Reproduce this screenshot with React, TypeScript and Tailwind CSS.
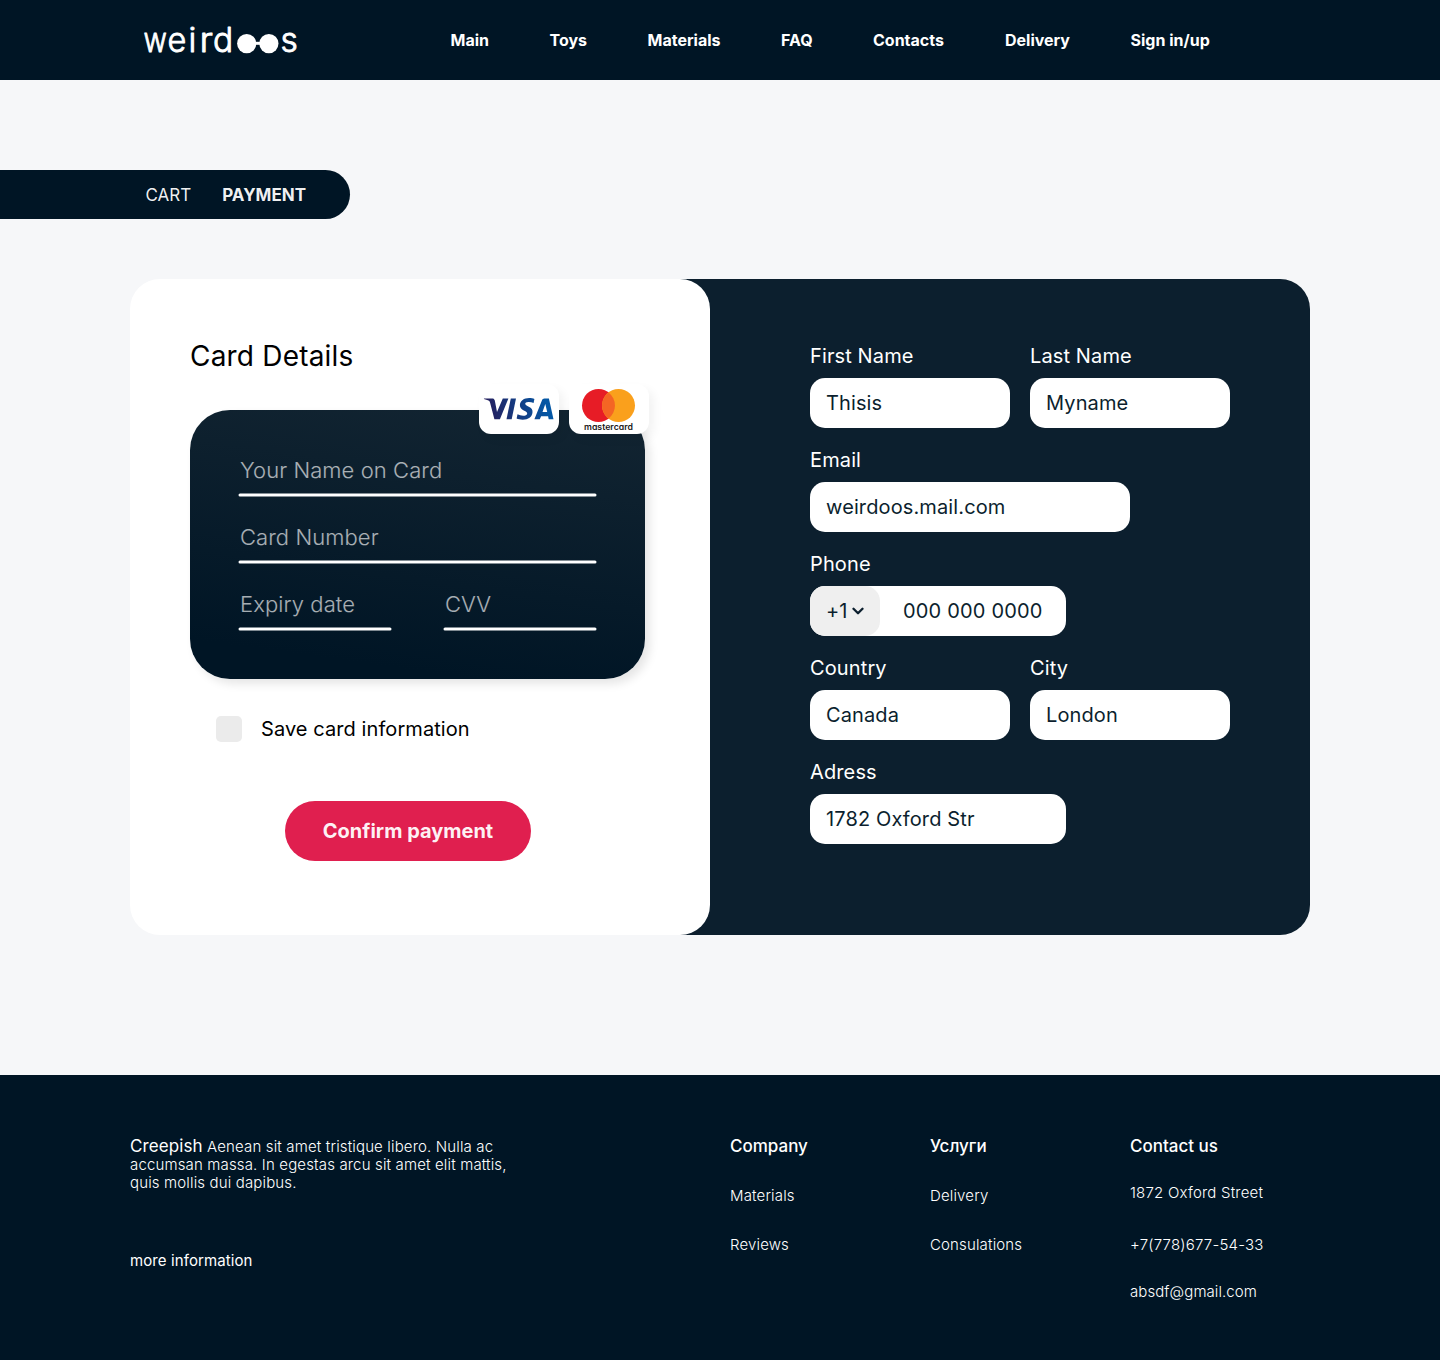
import React from "react";

const navItems = [
  { label: "Main", width: "w-[99px]" },
  { label: "Toys", width: "w-[98px]" },
  { label: "Materials", width: "w-[133.5px]" },
  { label: "FAQ", width: "w-[92px]" },
  { label: "Contacts", width: "w-[132px]" },
  { label: "Delivery", width: "w-[125.5px]" },
  { label: "Sign in/up", width: "w-[90px]" },
];

function Logo() {
  return (
    <svg width="160" height="60" viewBox="140 10 160 60" className="block overflow-visible" fill="white" stroke="white">
      <g fontFamily="Inter, sans-serif" fontSize="33.5" fontWeight="300" strokeWidth="0.9" strokeLinejoin="round">
        <text y="52.4" x="143.6" textLength="23.4" lengthAdjust="spacingAndGlyphs">w</text>
        <text y="52.4" x="167.4" textLength="18.8" lengthAdjust="spacingAndGlyphs">e</text>
        <text y="52.4" x="188.4">i</text>
        <text y="52.4" x="199.4" textLength="13.4" lengthAdjust="spacingAndGlyphs">r</text>
        <text y="52.4" x="213">d</text>
        <text y="52.4" x="280.6">s</text>
      </g>
      <g stroke="none">
        <circle cx="246.7" cy="43.6" r="9.6" />
        <circle cx="268.9" cy="43.6" r="9.6" />
        <rect x="254" y="41.8" width="8" height="3" />
      </g>
    </svg>
  );
}

function VisaLogo() {
  return (
    <svg width="80" height="50" viewBox="0 0 80 50" className="block">
      <defs>
        <linearGradient id="visa" gradientUnits="userSpaceOnUse" x1="10" y1="30" x2="66" y2="16">
          <stop offset="0" stopColor="#241f5e" />
          <stop offset="1" stopColor="#0457a5" />
        </linearGradient>
      </defs>
      <g fill="url(#visa)">
        <path d="M5 14.4H13.2C14.6 14.4 15.4 15 15.8 16.6L18 28L23.8 14.4H29.4L20.9 35.3H15.4L11.1 18.7C10.8 17.5 10.4 17 9.5 16.5C8.2 15.8 6.5 15.2 4.9 14.9Z" />
        <path d="M31.8 14.4H37L32.7 35.3H27.5Z" />
        <path d="M55.4 14.9L54.6 19C52.8 18.2 51.1 17.9 49.3 18C47.2 18.1 46.2 18.9 46.2 19.8C46.2 20.9 47.8 21.6 49.8 22.7C52.6 24.1 53.7 25.8 53.5 28.2C53.1 32.9 49.3 35.7 43.7 35.7C41.3 35.7 39.1 35.3 37.6 34.6L38.5 30.3C40.4 31.2 41.9 31.7 44.2 31.7C46.2 31.7 48.2 31 48.2 29.4C48.2 28.4 47.3 27.7 44.8 26.5C42.4 25.3 40.8 23.5 40.9 21C41.1 16.8 45 14 50.2 14C52.2 14 54 14.4 55.4 14.9Z" />
        <path fillRule="evenodd" d="M65.4 14.4H69.9L74.5 35.3H69.7L69.1 32.2H62.1L60.8 35.3H55.4L63 16.3C63.4 15.1 64.2 14.4 65.4 14.4ZM66.3 20L63.5 28.1H68.2Z" />
      </g>
    </svg>
  );
}

function MastercardLogo() {
  return (
    <svg width="80" height="50" viewBox="0 0 80 50" className="block">
      <circle cx="29.5" cy="21.5" r="16.5" fill="#e71c26" />
      <circle cx="49.5" cy="21.5" r="16.5" fill="#faa01c" />
      <path d="M39.5 8.4A16.5 16.5 0 0 1 39.5 34.6A16.5 16.5 0 0 1 39.5 8.4Z" fill="#f46524" />
      <text x="15" y="45.8" fontFamily="Inter, sans-serif" fontWeight="600" fontSize="8.4" textLength="49" lengthAdjust="spacingAndGlyphs" fill="#1a1718" className="[font-feature-settings:'cv11']">
        mastercard
      </text>
    </svg>
  );
}

function CardField({ label, width }: { label: string; width: number }) {
  return (
    <div className="flex h-[67px] flex-col">
      <span className="h-[37px] whitespace-nowrap text-[22px] leading-[28px] font-light tracking-[0.07px] text-white/65">{label}</span>
      <svg width={width + 5} height="4" className="-ml-[2px] block">
        <line x1="2" x2={width + 2} y1="2" y2="2" stroke="white" strokeWidth="3" strokeLinecap="round" />
      </svg>
    </div>
  );
}

function Field({ label, value, width }: { label: string; value: string; width: string }) {
  return (
    <div className="flex flex-col gap-[10px]">
      <span className="leading-[24px] text-white">{label}</span>
      <div className={`flex h-[50px] items-center rounded-[15px] bg-white px-4 ${width}`}>{value}</div>
    </div>
  );
}

function FooterColumn({ title, children }: { title: string; children: React.ReactNode }) {
  return (
    <div className="flex w-[200px] flex-col">
      <h3 className="text-[17px] leading-[22px] font-medium tracking-normal">{title}</h3>
      {children}
    </div>
  );
}

export default function App() {
  return (
    <div className="flex h-[1360px] w-[1440px] flex-col overflow-hidden bg-[#f6f7f9] font-['Inter',sans-serif] text-[#0c1f2e]">
      <header className="flex h-20 items-center bg-[#001525] pl-[140px] text-white">
        <Logo />
        <nav className="ml-[150.5px] flex text-[16px] leading-[20px] font-bold">
          {navItems.map((item) => (
            <a key={item.label} className={`whitespace-nowrap ${item.width}`}>{item.label}</a>
          ))}
        </nav>
      </header>

      <div className="mt-[90px] flex h-[49px] w-[350px] items-center gap-[31px] rounded-r-[25px] bg-[#001525] pt-[2px] pl-[145.5px] text-[17px] text-white/95">
        <span>CART</span>
        <span className="font-bold">PAYMENT</span>
      </div>

      <main className="mt-[60px] ml-[130px] flex h-[656px] w-[1180px]">
        <section className="relative z-10 flex w-[580px] flex-col rounded-[30px] bg-white pt-[60px] pl-[60px] text-black">
          <h1 className="h-[71px] text-[28px] leading-[34px] tracking-[0.2px]">Card Details</h1>
          <div className="relative h-[269px] w-[455px] rounded-[40px] bg-linear-[8deg,#001525_12%,#132532] pt-[46px] pl-[50px] shadow-[5px_5px_10px_rgba(0,0,0,0.1)]">
            <div className="absolute -top-[26px] left-[289px] flex gap-[10px]">
              <div className="rounded-[12px] bg-white shadow-[5px_5px_10px_rgba(0,0,0,0.05)]"><VisaLogo /></div>
              <div className="rounded-[12px] bg-white shadow-[5px_5px_10px_rgba(0,0,0,0.05)]"><MastercardLogo /></div>
            </div>
            <CardField label="Your Name on Card" width={355} />
            <CardField label="Card Number" width={355} />
            <div className="flex gap-[52px]">
              <CardField label="Expiry date" width={150} />
              <CardField label="CVV" width={150} />
            </div>
          </div>
          <label className="mt-[37px] ml-[26px] flex h-[26px] items-center gap-[19px] text-[20px] tracking-[0.08px]">
            <span className="size-[26px] rounded-[5px] bg-[#ebebeb]" />
            Save card information
          </label>
          <button className="mt-[59px] ml-[95px] h-[60px] w-[246px] rounded-full bg-[#e01f4f] text-[20px] font-bold text-white/95">
            Confirm payment
          </button>
        </section>

        <section className="-ml-10 flex w-[640px] flex-col gap-5 rounded-r-[30px] bg-[#0c1f2e] pt-[65px] pl-[140px] text-[20px] tracking-[0.12px]">
          <div className="flex gap-5">
            <Field label="First Name" value="Thisis" width="w-[200px]" />
            <Field label="Last Name" value="Myname" width="w-[200px]" />
          </div>
          <Field label="Email" value="weirdoos.mail.com" width="w-[320px]" />
          <div className="flex flex-col gap-[10px]">
            <span className="leading-[24px] text-white">Phone</span>
            <div className="flex h-[50px] w-[256px] items-center rounded-[15px] bg-white">
              <div className="flex h-full w-[70px] items-center rounded-[15px] bg-[#efefef] pl-4">
                +1
                <svg width="12" height="8" viewBox="0 0 12 8" className="ml-1" fill="none" stroke="#0c1f2e" strokeWidth="2.3" strokeLinecap="round" strokeLinejoin="round">
                  <path d="M1.5 1.7L6 6.2L10.5 1.7" />
                </svg>
              </div>
              <span className="ml-[23px] tracking-[0.18px]">000 000 0000</span>
            </div>
          </div>
          <div className="flex gap-5">
            <Field label="Country" value="Canada" width="w-[200px]" />
            <Field label="City" value="London" width="w-[200px]" />
          </div>
          <Field label="Adress" value="1782 Oxford Str" width="w-[256px]" />
        </section>
      </main>

      <footer className="mt-[140px] flex h-[285px] bg-[#001525] pt-[60px] pl-[130px] text-[15px] leading-[18px] font-light tracking-[0.15px] text-white">
        <div className="w-[600px] pt-[2px]">
          <p className="w-[390px]">
            <span className="text-[17px] font-normal tracking-[0.1px]">Creepish</span> Aenean sit amet tristique libero. Nulla ac accumsan massa. In egestas arcu sit amet elit mattis, quis mollis dui dapibus.
          </p>
          <a className="mt-[60px] block font-normal tracking-[0.1px]">more information</a>
        </div>
        <FooterColumn title="Company">
          <a className="mt-[30px]">Materials</a>
          <a className="mt-[31px]">Reviews</a>
        </FooterColumn>
        <FooterColumn title="Услуги">
          <a className="mt-[30px]">Delivery</a>
          <a className="mt-[31px]">Consulations</a>
        </FooterColumn>
        <FooterColumn title="Contact us">
          <span className="mt-[27px] tracking-[0.2px]">1872 Oxford Street</span>
          <span className="mt-[34px] tracking-[0.2px]">+7(778)677-54-33</span>
          <span className="mt-[29px] tracking-[0.08px]">absdf@gmail.com</span>
        </FooterColumn>
      </footer>
    </div>
  );
}
